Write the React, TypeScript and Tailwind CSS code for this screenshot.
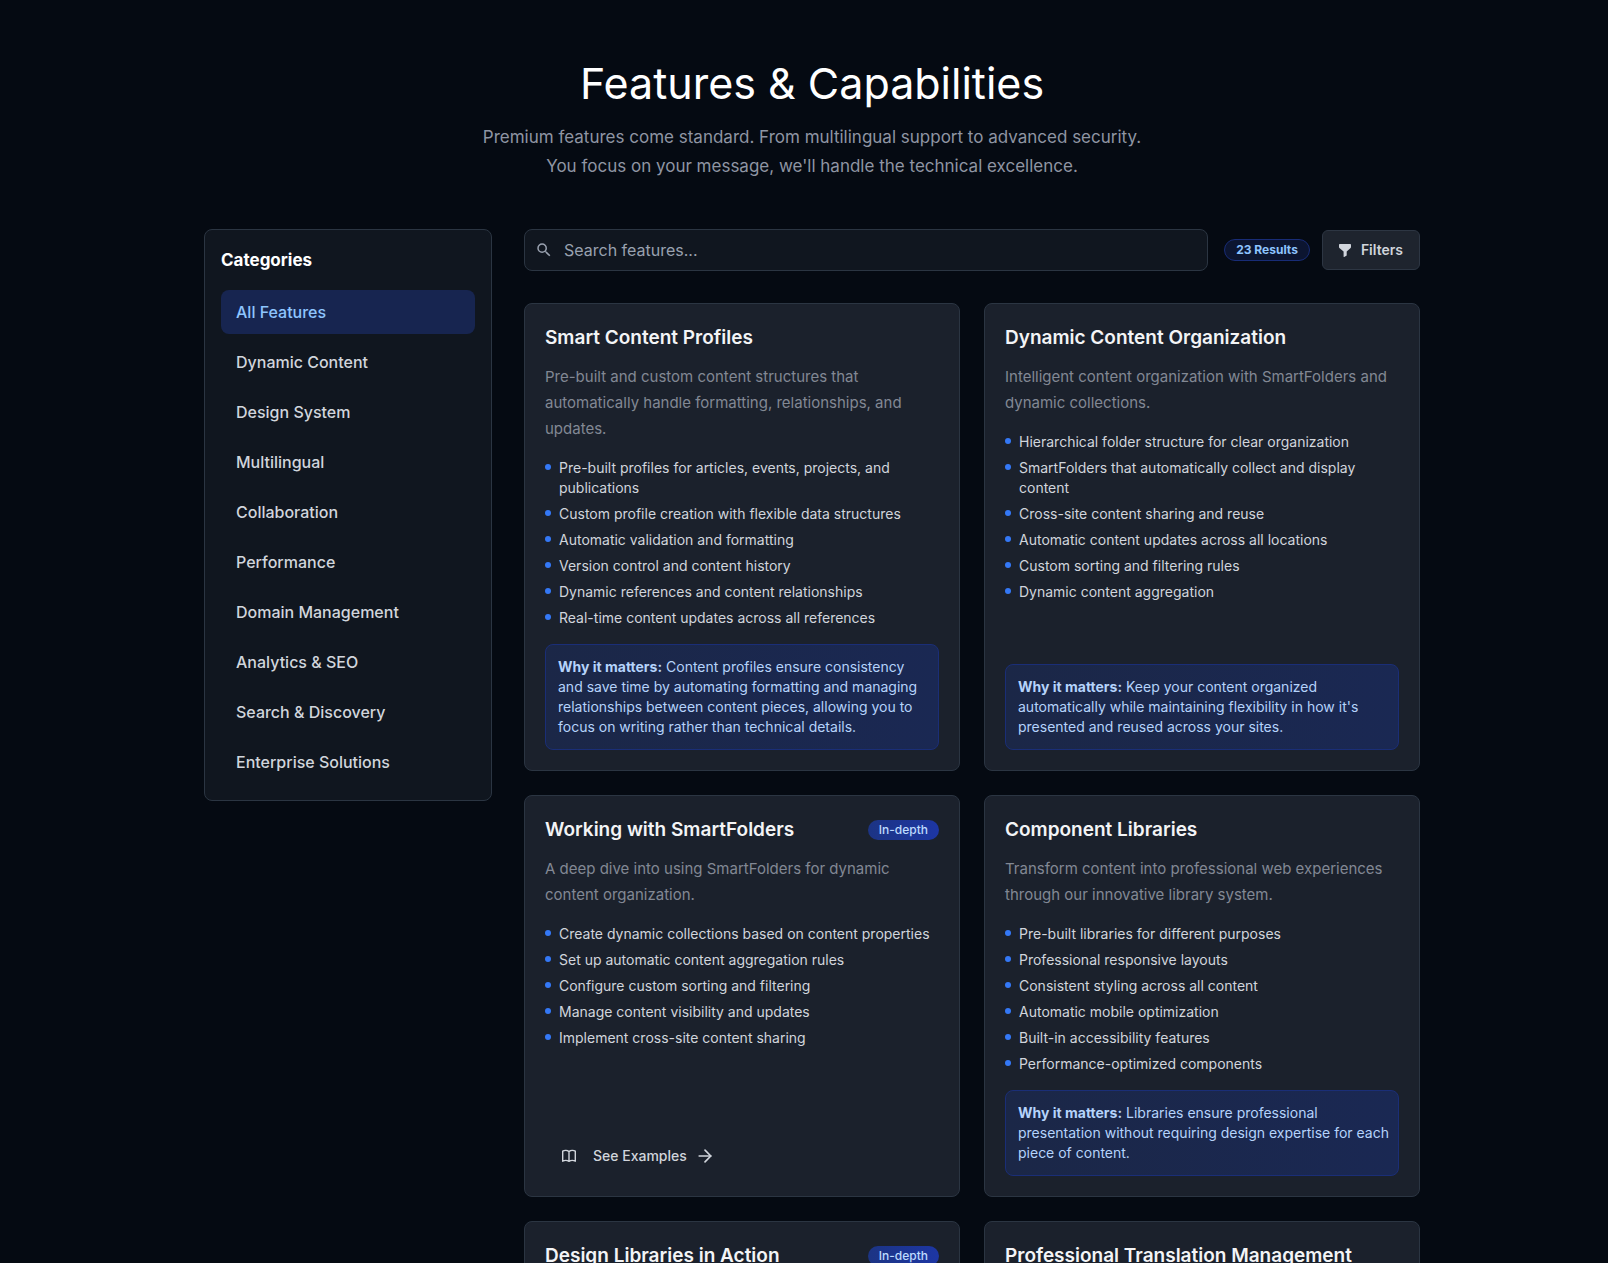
import { ArrowRight } from "lucide-react";

type Feature = {
  title: string;
  inDepth?: boolean;
  description: string;
  points: string[];
  why?: string;
};

const categories = [
  "All Features",
  "Dynamic Content",
  "Design System",
  "Multilingual",
  "Collaboration",
  "Performance",
  "Domain Management",
  "Analytics & SEO",
  "Search & Discovery",
  "Enterprise Solutions",
];

const features: Feature[] = [
  {
    title: "Smart Content Profiles",
    description:
      "Pre-built and custom content structures that automatically handle formatting, relationships, and updates.",
    points: [
      "Pre-built profiles for articles, events, projects, and publications",
      "Custom profile creation with flexible data structures",
      "Automatic validation and formatting",
      "Version control and content history",
      "Dynamic references and content relationships",
      "Real-time content updates across all references",
    ],
    why: "Content profiles ensure consistency and save time by automating formatting and managing relationships between content pieces, allowing you to focus on writing rather than technical details.",
  },
  {
    title: "Dynamic Content Organization",
    description: "Intelligent content organization with SmartFolders and dynamic collections.",
    points: [
      "Hierarchical folder structure for clear organization",
      "SmartFolders that automatically collect and display content",
      "Cross-site content sharing and reuse",
      "Automatic content updates across all locations",
      "Custom sorting and filtering rules",
      "Dynamic content aggregation",
    ],
    why: "Keep your content organized automatically while maintaining flexibility in how it's presented and reused across your sites.",
  },
  {
    title: "Working with SmartFolders",
    inDepth: true,
    description: "A deep dive into using SmartFolders for dynamic content organization.",
    points: [
      "Create dynamic collections based on content properties",
      "Set up automatic content aggregation rules",
      "Configure custom sorting and filtering",
      "Manage content visibility and updates",
      "Implement cross-site content sharing",
    ],
  },
  {
    title: "Component Libraries",
    description: "Transform content into professional web experiences through our innovative library system.",
    points: [
      "Pre-built libraries for different purposes",
      "Professional responsive layouts",
      "Consistent styling across all content",
      "Automatic mobile optimization",
      "Built-in accessibility features",
      "Performance-optimized components",
    ],
    why: "Libraries ensure professional presentation without requiring design expertise for each piece of content.",
  },
  { title: "Design Libraries in Action", inDepth: true, description: "", points: [] },
  { title: "Professional Translation Management", description: "", points: [] },
];

function SearchIcon() {
  return (
    <svg viewBox="0 0 24 24" className="size-[18px]" fill="currentColor" aria-hidden="true">
      <path d="M15.5 14h-.79l-.28-.27A6.471 6.471 0 0 0 16 9.5 6.5 6.5 0 1 0 9.5 16c1.61 0 3.09-.59 4.23-1.57l.27.28v.79l5 4.99L20.49 19l-4.99-5zm-6 0C7.01 14 5 11.99 5 9.5S7.01 5 9.5 5 14 7.01 14 9.5 11.99 14 9.5 14z" />
    </svg>
  );
}

function FunnelIcon() {
  return (
    <svg viewBox="0 0 12 13" className="h-[13px] w-3" fill="currentColor" aria-hidden="true">
      <path d="M.8 0H11.2Q12 0 12 .8V3Q12 3.5 11.6 3.9L7.7 7.6V11.4L5.2 13Q4.6 13 4.6 12.4V7.6L.4 3.9Q0 3.5 0 3V.8Q0 0 .8 0Z" />
    </svg>
  );
}

function BookIcon() {
  return (
    <svg
      viewBox="0 0 16 16"
      className="size-4"
      fill="none"
      stroke="currentColor"
      strokeWidth="1.4"
      strokeLinecap="round"
      strokeLinejoin="round"
      aria-hidden="true"
    >
      <path d="M8 3.6C6.4 2.3 3.4 2.2 1.7 3.2V13.2C3.4 12.3 6.4 12.4 8 13.4C9.6 12.4 12.6 12.3 14.3 13.2V3.2C12.6 2.2 9.6 2.3 8 3.6ZM8 3.6V13.4" />
    </svg>
  );
}

function FeatureCard({ feature }: { feature: Feature }) {
  return (
    <article className="flex flex-col rounded-lg border border-[#2b3542] bg-[#1b212c] p-5">
      <div className="flex items-center justify-between">
        <h3 className="text-[19px] leading-7 font-semibold text-gray-100">{feature.title}</h3>
        {feature.inDepth && (
          <span className="rounded-full bg-linear-to-r from-[#1c3484] to-[#1d36a4] px-[11px] text-xs leading-5 font-medium text-blue-200">
            In-depth
          </span>
        )}
      </div>
      <p className="mt-3 text-[15px] leading-[26px] text-[#828894]">{feature.description}</p>
      <ul className="mt-4 mb-4 flex flex-col gap-1.5 text-sm text-gray-300">
        {feature.points.map((point) => (
          <li key={point} className="flex items-start gap-2">
            <span className="mt-1.5 size-1.5 shrink-0 rounded-full bg-[#3478f6]" />
            <span>{point}</span>
          </li>
        ))}
      </ul>
      <div className="mt-auto">
        {feature.why ? (
          <p className="rounded-lg border border-[#1a2e77] bg-linear-to-r from-[#1b2747] to-[#1a2853] py-3 pr-2 pl-3 text-sm text-[#b5d3fb]">
            <strong className="font-bold">Why it matters:</strong> {feature.why}
          </p>
        ) : (
          <button type="button" className="flex h-10 items-center px-4 text-sm font-medium text-gray-300">
            <BookIcon />
            <span className="mr-2 ml-4">See Examples</span>
            <ArrowRight className="size-5" aria-hidden="true" />
          </button>
        )}
      </div>
    </article>
  );
}

export default function App() {
  return (
    <div className="h-screen overflow-hidden bg-[#050a12] pl-4 font-['Inter',sans-serif] text-gray-300">
      <div className="mx-auto max-w-[1216px] pt-14">
        <header className="text-center">
          <h1 className="text-[43px] leading-[54px] font-normal text-white">Features &amp; Capabilities</h1>
          <p className="mt-[13px] text-[17px] leading-[29px] text-[#8f95a3]">
            Premium features come standard. From multilingual support to advanced security.
            <br />
            You focus on your message, we'll handle the technical excellence.
          </p>
        </header>

        <div className="mt-12 flex items-start gap-8">
          <aside className="w-72 shrink-0 rounded-lg border border-[#2b3542] bg-[#10161f] p-4">
            <h2 className="text-[17px] leading-7 font-bold text-white">Categories</h2>
            <nav className="mt-4 flex flex-col gap-1.5">
              {categories.map((name, i) => (
                <button
                  key={name}
                  type="button"
                  className={
                    i === 0
                      ? "h-11 rounded-lg bg-[#172550] px-[15px] text-left font-medium text-blue-300"
                      : "h-11 rounded-lg px-[15px] text-left font-medium text-gray-300"
                  }
                >
                  {name}
                </button>
              ))}
            </nav>
          </aside>

          <main className="min-w-0 flex-1">
            <div className="flex items-center">
              <label className="flex h-[42px] flex-1 items-center rounded-lg border border-[#2b3542] bg-[#10161f] pl-2.5 text-gray-400">
                <SearchIcon />
                <input
                  type="text"
                  aria-label="Search features"
                  placeholder="Search features..."
                  className="ml-[11px] min-w-0 flex-1 bg-transparent outline-none placeholder:text-gray-400"
                />
              </label>
              <span className="ml-4 rounded-full border border-[#182c76] bg-[#0c1530] px-[11px] text-xs leading-5 font-bold text-blue-300">
                23 Results
              </span>
              <button
                type="button"
                className="ml-3 flex h-10 items-center gap-2.5 rounded-md border border-[#2d3643] bg-[#1e242e] px-4 text-sm font-semibold text-gray-300"
              >
                <FunnelIcon />
                Filters
              </button>
            </div>

            <div className="mt-8 grid grid-cols-2 gap-6">
              {features.map((feature) => (
                <FeatureCard key={feature.title} feature={feature} />
              ))}
            </div>
          </main>
        </div>
      </div>
    </div>
  );
}
